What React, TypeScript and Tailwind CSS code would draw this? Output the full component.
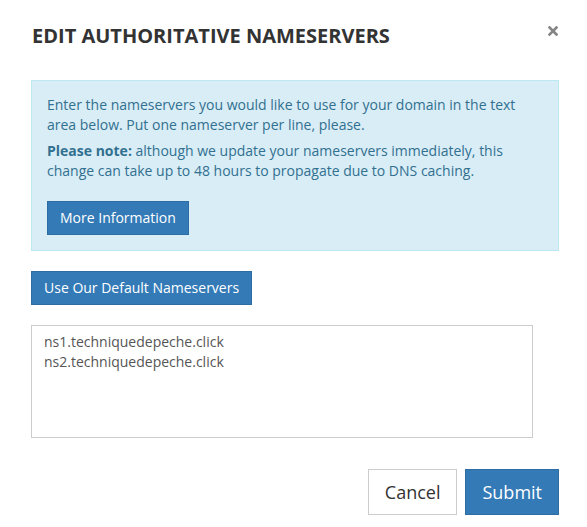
export default function App() {
  return (
    <div className="w-[587px] h-[527px] bg-white font-['Open_Sans',sans-serif] text-[14px] leading-[20px] text-[#333]">
      {/* Header */}
      <div className="flex items-start justify-between pl-[32px] pr-[29px] pt-[24px]">
        <h4 className="text-[20px] font-bold leading-[24px] text-[#333]">EDIT AUTHORITATIVE NAMESERVERS</h4>
        <button className="mt-[2px] w-[10px] h-[10px] flex items-center justify-center" aria-label="Close">
          <svg width="10" height="10" viewBox="0 0 10 10">
            <path d="M1.5 1.5 L8.5 8.5 M8.5 1.5 L1.5 8.5" stroke="#858585" strokeWidth="2.6" strokeLinecap="square" />
          </svg>
        </button>
      </div>

      <div className="pl-[31px] pr-[28px] pt-[32px]">
        {/* Info alert */}
        <div className="border border-[#bce8f1] bg-[#d9edf7] text-[#31708f] pl-[15px] pr-[15px] pt-[14px] pb-[15px]">
          <p className="mb-[6px]">
            Enter the nameservers you would like to use for your domain in the text area below. Put one nameserver per line, please.
          </p>
          <p>
            <strong className="font-bold">Please note:</strong> although we update your nameservers immediately, this change can take up to 48 hours to propagate due to DNS caching.
          </p>
          <button className="mt-[20px] bg-[#337ab7] border border-[#2e6da4] text-white px-[12px] py-[6px] leading-[20px]">
            More Information
          </button>
        </div>

        <button className="mt-[20px] bg-[#337ab7] border border-[#2e6da4] text-white px-[12px] py-[6px] leading-[20px]">
          Use Our Default Nameservers
        </button>

        <textarea
          className="block mt-[20px] w-[502px] h-[113px] border border-[#ccc] px-[12px] py-[6px] text-[#555] leading-[20px] resize-none outline-none"
          defaultValue={'ns1.techniquedepeche.click\nns2.techniquedepeche.click'}
        />

        {/* Footer */}
        <div className="flex justify-end gap-[8px] mt-[31px]">
          <button className="border border-[#ccc] bg-white text-[#333] text-[18px] leading-[24px] px-[16px] py-[10px]">
            Cancel
          </button>
          <button className="border border-[#2e6da4] bg-[#337ab7] text-white text-[18px] leading-[24px] px-[16px] py-[10px]">
            Submit
          </button>
        </div>
      </div>
    </div>
  );
}
